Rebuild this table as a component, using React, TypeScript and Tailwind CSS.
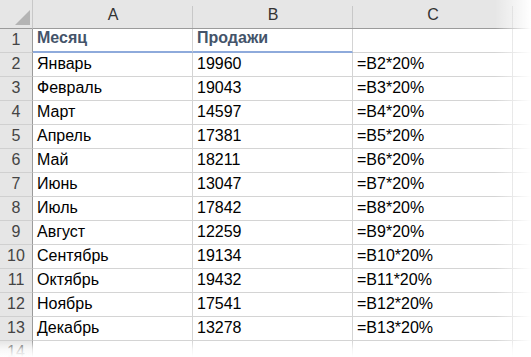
import React from 'react';

const ROWS: [string, string, string][] = [
  ['Январь', '19960', '=B2*20%'],
  ['Февраль', '19043', '=B3*20%'],
  ['Март', '14597', '=B4*20%'],
  ['Апрель', '17381', '=B5*20%'],
  ['Май', '18211', '=B6*20%'],
  ['Июнь', '13047', '=B7*20%'],
  ['Июль', '17842', '=B8*20%'],
  ['Август', '12259', '=B9*20%'],
  ['Сентябрь', '19134', '=B10*20%'],
  ['Октябрь', '19432', '=B11*20%'],
  ['Ноябрь', '17541', '=B12*20%'],
  ['Декабрь', '13278', '=B13*20%'],
];

const cell = 'h-[24px] border-r border-b border-[#d4d4d4] flex items-end pl-[4px] whitespace-nowrap';
const rowHead = 'h-[24px] border-r border-b border-r-[#9b9b9b] border-b-[#d0d0d0] bg-[#e6e6e6] flex items-end justify-center text-[#444]';
const colHead = 'h-[29px] bg-[#e6e6e6] border-b border-[#9b9b9b] flex items-end justify-center pb-[1px] text-[#333] relative';

export default function App() {
  return (
    <div className="relative w-[531px] h-[357px] overflow-hidden bg-white text-[16px] text-black" style={{ fontFamily: '"Liberation Sans", Arial, sans-serif' }}>
      <div className="grid grid-cols-[33px_160px_160px_160px_1fr]">
        {/* column headers */}
        <div className="h-[29px] bg-[#e6e6e6] border-b border-r border-b-[#9b9b9b] border-r-[#c8c8c8] relative">
          <svg className="absolute left-[15px] top-[10px]" width="15" height="15" viewBox="0 0 15 15">
            <polygon points="15,0 15,15 0,15" fill="#b4b4b4" />
          </svg>
        </div>
        {['A', 'B', 'C', ''].map((c, i) => (
          <div key={i} className={colHead}>
            {c}
            {i < 3 && <div className="absolute right-0 top-[6px] bottom-0 w-px bg-[#c8c8c8]" />}
          </div>
        ))}

        {/* row 1 */}
        <div className={rowHead}>1</div>
        <div className="h-[24px] border-r border-r-[#d4d4d4] border-b-2 border-b-[#8eaadb] flex items-end pl-[4px] pb-[1px] font-bold text-[#44546a]">Месяц</div>
        <div className="h-[24px] border-r border-r-[#d4d4d4] border-b-2 border-b-[#8eaadb] flex items-end pl-[4px] pb-[1px] font-bold text-[#44546a]">Продажи</div>
        <div className={cell}></div>
        <div className="h-[24px] border-b border-[#d4d4d4]"></div>

        {ROWS.map((r, i) => (
          <React.Fragment key={i}>
            <div className={rowHead}>{i + 2}</div>
            <div className={cell}>{r[0]}</div>
            <div className={cell}>{r[1]}</div>
            <div className={cell}>{r[2]}</div>
            <div className="h-[24px] border-b border-[#d4d4d4]"></div>
          </React.Fragment>
        ))}

        <div className={rowHead}>14</div>
        <div className={cell}></div>
        <div className={cell}></div>
        <div className={cell}></div>
        <div className="h-[24px]"></div>
      </div>

      {/* torn-edge fades */}
      <div className="pointer-events-none absolute top-0 right-0 bottom-0 w-[36px] bg-gradient-to-r from-white/0 to-white" />
      <div className="pointer-events-none absolute left-0 right-0 bottom-0 h-[16px] bg-gradient-to-b from-white/0 via-white/70 to-white" />
    </div>
  );
}
